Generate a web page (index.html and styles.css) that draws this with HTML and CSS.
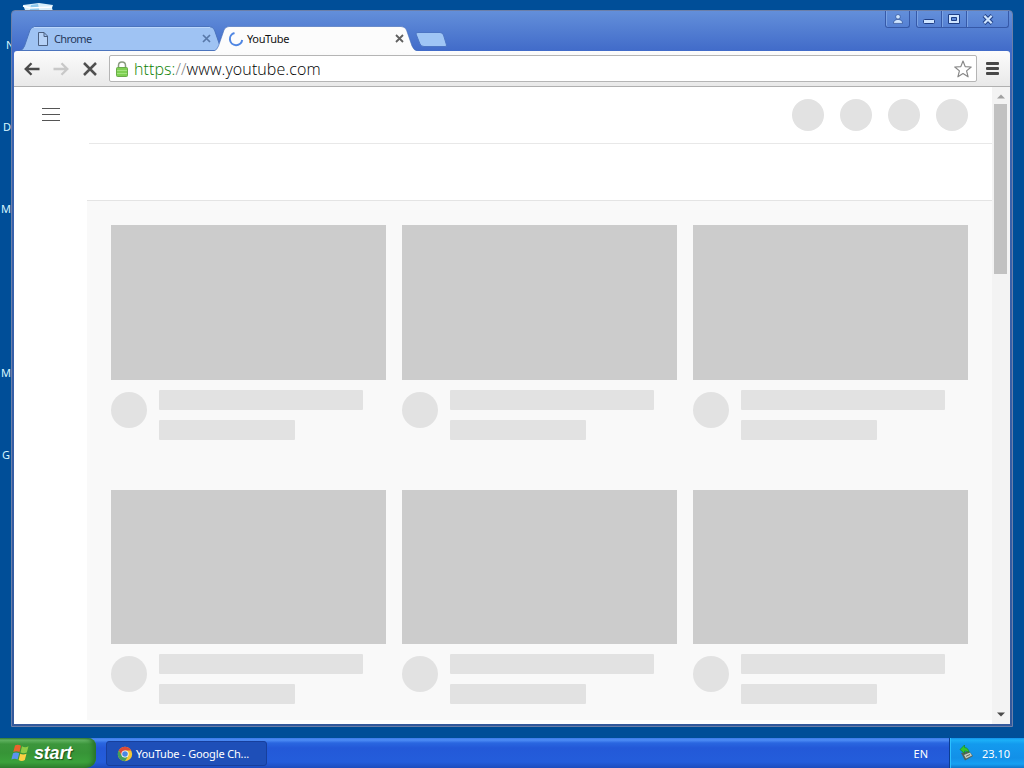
FILE: index.html
```html
<!DOCTYPE html>
<html lang="en">

<head>
  <meta charset="utf-8">
  <title>YouTube</title>
  <link rel="stylesheet" href="styles.css">
</head>

<body>
  <div class="desktop">
    <!-- desktop icons peeking out behind the window -->
    <svg class="desk-icon" width="34" height="10" viewBox="0 0 34 10">
      <path d="M1 2 L17 0 L31 2 L30 5 L31 8 L31 10 L2 10 L3 7 Z" fill="#d9effb" />
      <path d="M9 2 L16 1 L18 10 L7 10 Z" fill="#8cc8ee" />
      <path d="M1 3 L8 5 L30 4" fill="none" stroke="#fff" stroke-width="1.5" />
    </svg>
    <span class="desk-label label-n">N</span>
    <span class="desk-label label-d">D</span>
    <span class="desk-label label-m1">M</span>
    <span class="desk-label label-m2">M</span>
    <span class="desk-label label-g">G</span>

    <div class="window">
      <div class="titlebar">
        <div class="tab tab-inactive">
          <svg class="tab-shape" width="204" height="25" viewBox="0 0 204 25">
            <path d="M0 24.5 Q3 24 4.500 20 L10 4 Q11.500 .5 15 .5 H189 Q193 .5 194.500 4 L200 20 Q201 24 204 24.500 Z" fill="#9fc3f3" stroke="#4b74bd" />
            <path d="M14 1.500 H190" stroke="#bcd7fb" />
          </svg>
          <svg class="tab-icon page-icon" width="12" height="14" viewBox="0 0 12 14">
            <path d="M1.500 .5 H7 L10.500 4 V13.500 H1.500 Z M7 .5 V4.500 H10.500" fill="#b5d1f7" stroke="#4b5f80" />
          </svg>
          <span class="tab-title">Chrome</span>
          <svg class="tab-close" width="9" height="9" viewBox="0 0 9 9">
            <path d="M1 1 L8 8 M8 1 L1 8" stroke="#5878a8" stroke-width="1.700" />
          </svg>
        </div>
        <div class="tab tab-active">
          <svg class="tab-shape" width="204" height="25" viewBox="0 0 204 25">
            <path d="M0 25 Q3 24 4.500 20 L10 4 Q11.500 .5 15 .5 H187 Q191 .5 192.500 4 L198 20 Q200 25 204 25 Z" fill="#fcfcfc" />
            <path d="M0 25 Q3 24 4.500 20 L10 4 Q11.500 .5 15 .5 H187 Q191 .5 192.500 4 L198 20 Q200 25 204 25" fill="none" stroke="#416bb8" stroke-opacity=".6" />
          </svg>
          <svg class="tab-icon" width="16" height="16" viewBox="0 0 16 16">
            <path d="M6.500 2 A6.200 6.200 0 1 0 14.200 9" fill="none" stroke="#4f86e3" stroke-width="2" />
          </svg>
          <span class="tab-title">YouTube</span>
          <svg class="tab-close" width="9" height="9" viewBox="0 0 9 9">
            <path d="M1 1 L8 8 M8 1 L1 8" stroke="#606060" stroke-width="1.800" />
          </svg>
        </div>
        <svg class="new-tab" width="33" height="17" viewBox="0 0 33 17">
          <path d="M3 1.500 H25 Q27.500 1.500 28.500 4 L31.500 14 Q32 15.500 30 15.500 H9 Q6 15.500 5 13 L1 3 Q.5 1.500 3 1.500 Z" fill="#9fc5f5" stroke="#4c75c4" />
        </svg>
        <div class="window-buttons">
          <div class="win-btn btn-user">
            <svg width="10" height="10" viewBox="0 0 10 10">
              <circle cx="5" cy="2.800" r="2.300" fill="#cfe5ff" stroke="#1f3f86" stroke-width=".6" />
              <path d="M.4 9.400 Q.6 5.700 5 5.400 Q9.400 5.700 9.600 9.400 Z" fill="#cfe5ff" stroke="#1f3f86" stroke-width=".6" />
            </svg>
          </div>
          <div class="win-btn btn-min">
            <svg width="13" height="12" viewBox="0 0 13 12">
              <rect x=".5" y="6.500" width="11" height="4" rx="1" fill="#cfe5ff" stroke="#1f3f86" />
            </svg>
          </div>
          <div class="win-btn btn-max">
            <svg width="12" height="10" viewBox="0 0 12 10">
              <path d="M.5 .5 H11.500 V9.500 H.5 Z M3.500 3.500 V6.500 H8.500 V3.500 Z" fill="#cfe5ff" fill-rule="evenodd" stroke="#1f3f86" />
            </svg>
          </div>
          <div class="win-btn btn-close">
            <svg width="12" height="11" viewBox="0 0 12 11">
              <path d="M2 1.500 L10 9.500 M10 1.500 L2 9.500" stroke="#1f3f86" stroke-width="4" />
              <path d="M2.300 1.800 L9.700 9.200 M9.700 1.800 L2.300 9.200" stroke="#cfe5ff" stroke-width="2.200" />
            </svg>
          </div>
        </div>
      </div>

      <div class="toolbar">
        <svg class="nav-icon" width="16" height="14" viewBox="0 0 16 14">
          <path d="M15.500 7 H2 M7.500 1.200 L1.700 7 L7.500 12.800" fill="none" stroke="#4a4a4a" stroke-width="2.300" />
        </svg>
        <svg class="nav-icon" width="16" height="14" viewBox="0 0 16 14">
          <path d="M.5 7 H14 M8.500 1.200 L14.300 7 L8.500 12.800" fill="none" stroke="#c8c8c8" stroke-width="2.300" />
        </svg>
        <svg class="nav-icon" width="14" height="14" viewBox="0 0 14 14">
          <path d="M1 1 L13 13 M13 1 L1 13" stroke="#505050" stroke-width="2.500" />
        </svg>
        <div class="omnibox">
          <svg class="lock" width="12" height="16" viewBox="0 0 12 16">
            <path d="M2.500 8 V4.500 Q2.500 1 6 1 Q9.500 1 9.500 4.500 V8" fill="none" stroke="#8a9a80" stroke-width="1.500" />
            <rect x=".5" y="6.500" width="11" height="9" rx="1" fill="#7fd053" stroke="#6aab4a" />
            <path d="M1 9.500 H11 M1 12.500 H11" stroke="#a3e37f" />
          </svg>
          <span class="url"><span class="scheme">https:</span><span class="slashes">//</span>www.youtube.com</span>
          <svg class="star" width="18" height="18" viewBox="0 0 18 18">
            <path d="M9 1 L11.200 6.600 L17.200 7 L12.600 10.900 L14.100 16.800 L9 13.600 L3.900 16.800 L5.400 10.900 L.8 7 L6.800 6.600 Z" fill="#fff" stroke="#888" stroke-width="1.200" stroke-linejoin="round" />
          </svg>
        </div>
        <div class="menu-icon"><i></i><i></i><i></i></div>
      </div>

      <div class="viewport">
        <div class="page">
          <div class="guide">
            <div class="guide-button"></div>
          </div>
          <div class="main">
            <div class="masthead">
              <span class="round"></span>
              <span class="round"></span>
              <span class="round"></span>
              <span class="round"></span>
            </div>
            <div class="chips"></div>
            <div class="grid">
              <div class="video">
                <div class="thumb"></div>
                <div class="details"><span class="avatar"></span><div class="lines"><div class="line"></div><div class="line short"></div></div></div>
              </div>
              <div class="video">
                <div class="thumb"></div>
                <div class="details"><span class="avatar"></span><div class="lines"><div class="line"></div><div class="line short"></div></div></div>
              </div>
              <div class="video">
                <div class="thumb"></div>
                <div class="details"><span class="avatar"></span><div class="lines"><div class="line"></div><div class="line short"></div></div></div>
              </div>
              <div class="video">
                <div class="thumb"></div>
                <div class="details"><span class="avatar"></span><div class="lines"><div class="line"></div><div class="line short"></div></div></div>
              </div>
              <div class="video">
                <div class="thumb"></div>
                <div class="details"><span class="avatar"></span><div class="lines"><div class="line"></div><div class="line short"></div></div></div>
              </div>
              <div class="video">
                <div class="thumb"></div>
                <div class="details"><span class="avatar"></span><div class="lines"><div class="line"></div><div class="line short"></div></div></div>
              </div>
            </div>
          </div>
        </div>
        <div class="scrollbar">
          <svg width="8" height="5" viewBox="0 0 8 5"><path d="M0 4.500 L4 .5 L8 4.500 Z" fill="#a0a0a0" /></svg>
          <div class="scroll-thumb"></div>
          <svg class="scroll-down" width="8" height="5" viewBox="0 0 8 5"><path d="M0 .5 L4 4.500 L8 .5 Z" fill="#4a4a4a" /></svg>
        </div>
      </div>
    </div>
  </div>

  <div class="taskbar">
    <div class="start">
      <svg width="20" height="20" viewBox="0 0 20 20">
        <path d="M4 2.500 Q7 .8 10 2.800 L8.500 9 Q5.500 7.500 2.300 9 Z" fill="#e9632d" />
        <path d="M11 3.300 Q14 5 17.500 3.300 L15.800 9.500 Q12.500 11 9.500 9.500 Z" fill="#8ccc45" />
        <path d="M2 10.200 Q5 8.700 8.200 10.200 L6.600 16.500 Q3.500 15 .4 16.500 Z" fill="#5b93ee" />
        <path d="M9.200 10.700 Q12.300 12.300 15.500 10.700 L13.800 17 Q10.800 18.800 7.600 17 Z" fill="#fbd043" />
      </svg>
      <span>start</span>
    </div>
    <div class="task">
      <svg width="16" height="16" viewBox="0 0 16 16">
        <circle cx="8" cy="8" r="7.200" fill="#f3c736" />
        <path d="M1.760 4.400 A7.200 7.200 0 0 1 14.240 4.400 L8 4.400 L4.900 9.800 Z" fill="#dc4a38" />
        <path d="M1.760 4.400 L4.900 9.800 L8 11.600 L11 9.900 L8 15.200 A7.200 7.200 0 0 1 1.760 4.400 Z" fill="#44a05a" />
        <circle cx="8" cy="8" r="3.600" fill="#fff" />
        <circle cx="8" cy="8" r="2.800" fill="#4a86e0" />
      </svg>
      <span>YouTube - Google Ch...</span>
    </div>
    <span class="lang">EN</span>
    <div class="tray">
      <svg width="16" height="16" viewBox="0 0 16 16">
        <path d="M2 8 L10 6 L14 11 L6 15.500 Z" fill="#52635b" />
        <path d="M5 10 L11 7.500 L13 10.500 L7 13.500 Z" fill="#c9cfc0" />
        <path d="M7 11.300 L11 9.500" stroke="#59645c" />
        <path d="M1 4.500 L5.500 0 V2.500 Q9.500 2.700 10 7.500 Q8.500 5.800 5.500 6 V8.500 Z" fill="#35c62d" stroke="#168022" stroke-width=".6" />
      </svg>
      <span>23.10</span>
    </div>
  </div>
</body>

</html>
```
FILE: styles.css
```css
* {
  box-sizing: border-box;
}

body {
  margin: 0;
  width: 1024px;
  height: 768px;
  overflow: hidden;
  display: flex;
  flex-direction: column;
  font-family: "Noto Sans", "Open Sans", sans-serif;
  font-size: 11px;
  color: #111;
}

svg {
  display: block;
  flex: none;
}

.desktop {
  position: relative;
  flex: 1;
  background: #004e98;
}

.desk-icon {
  position: absolute;
  left: 22px;
  top: 3px;
}

.desk-label {
  position: absolute;
  left: 2px;
  line-height: 14px;
  color: #d8f6ff;
}

.label-n {
  left: 6px;
  top: 38px;
}

.label-d {
  left: 3px;
  top: 120px;
}

.label-m1 {
  left: 1px;
  top: 202px;
}

.label-m2 {
  left: 1px;
  top: 366px;
}

.label-g {
  top: 448px;
}

/* browser window */
.window {
  position: absolute;
  left: 11px;
  top: 10px;
  width: 1002px;
  height: 717px;
  padding: 0 2px 2px;
  display: flex;
  flex-direction: column;
  border: 1px solid #6c7fa8;
  border-radius: 4px 4px 0 0;
  background: linear-gradient(#638fda 0, #416bc9 40px, #3a64b0 80px, #33599c);
}

.titlebar {
  height: 40px;
  flex: none;
  display: flex;
  align-items: flex-end;
  padding-left: 6px;
}

.tab {
  position: relative;
  width: 204px;
  height: 25px;
  display: flex;
  align-items: center;
  padding: 0 13px 0 16px;
}

.tab-active {
  width: 204px;
  margin-left: -10px;
  padding: 0 14px 0 14px;
}

.tab-shape {
  position: absolute;
  left: 0;
  top: 0;
}

.tab-icon,
.tab-title,
.tab-close {
  position: relative;
}

.page-icon {
  margin-left: 1px;
}

.tab-title {
  flex: 1;
  margin-left: 5px;
  line-height: 14px;
  letter-spacing: -.6px;
}

.tab-inactive .tab-title {
  color: #26395c;
}

.tab-active .tab-title {
  margin-left: 3px;
  letter-spacing: -.35px;
}

.new-tab {
  margin: 0 0 3px -3px;
}

.window-buttons {
  display: flex;
  align-self: flex-start;
  margin-left: auto;
  margin-right: 1px;
}

.win-btn {
  height: 17px;
  display: flex;
  align-items: center;
  justify-content: center;
  border: 1px solid #3659a8;
  border-top: none;
  box-shadow: inset 1px 0 #7ba3e4;
}

.btn-user {
  width: 25px;
  margin-right: 6px;
  border-radius: 0 0 3px 3px;
}

.btn-min {
  width: 26px;
  border-radius: 0 0 0 3px;
}

.btn-max {
  width: 25px;
  border-left: none;
}

.btn-close {
  width: 42px;
  border-left: none;
  border-radius: 0 0 3px 0;
}

.toolbar {
  height: 36px;
  flex: none;
  display: flex;
  align-items: center;
  padding: 0 11px 0 10px;
  background: linear-gradient(#fcfcfc, #e9e9e9);
  border-bottom: 1px solid #b0b0b0;
  border-radius: 3px 3px 0 0;
}

.nav-icon {
  margin-right: 13px;
}

.nav-icon:nth-child(2) {
  margin-right: 14px;
}

.nav-icon:nth-child(3) {
  margin-right: 12px;
}

.omnibox {
  flex: 1;
  height: 27px;
  display: flex;
  align-items: center;
  padding: 0 4px 0 6px;
  background: #fff;
  border: 1px solid #b5b5b5;
  border-radius: 2px;
}

.url {
  flex: 1;
  margin-left: 6px;
  font-family: "Open Sans", sans-serif;
  font-size: 16px;
  font-weight: 300;
  line-height: 22px;
  letter-spacing: .09px;
  color: #000;
}

.scheme {
  color: #0b8000;
}

.slashes {
  color: #808080;
}

.menu-icon {
  width: 13px;
  margin-left: 9px;
  display: flex;
  flex-direction: column;
  gap: 2px;
}

.menu-icon i {
  height: 3px;
  background: #484848;
  border-radius: 1px;
}

/* page content */
.viewport {
  flex: 1;
  min-height: 0;
  display: flex;
  background: #fff;
}

.page {
  flex: 1;
  display: flex;
  overflow: hidden;
}

.guide {
  width: 73px;
  padding: 21px 0 0 28px;
}

.guide-button {
  width: 18px;
  height: 13px;
  border-top: 1px solid #555;
  border-bottom: 1px solid #555;
  background: linear-gradient(#555, #555) 0 5px / 100% 1px no-repeat;
}

.main {
  flex: 1;
}

.masthead {
  height: 57px;
  margin-left: 2px;
  display: flex;
  justify-content: flex-end;
  align-items: center;
  gap: 16px;
  padding-right: 24px;
  border-bottom: 1px solid #e8e8e8;
}

.round {
  width: 32px;
  height: 32px;
  border-radius: 50%;
  background: #e2e2e2;
}

.chips {
  height: 57px;
  border-bottom: 1px solid #e4e4e4;
}

.grid {
  height: 519px;
  display: grid;
  grid-template-columns: repeat(3, 275px);
  grid-template-rows: 265px 264px;
  column-gap: 16px;
  padding: 24px;
  background: #f9f9f9;
}

.thumb {
  height: 155px;
  background: #ccc;
}

.video:nth-child(n+4) .thumb {
  height: 154px;
}

.details {
  display: flex;
  gap: 12px;
  padding-top: 10px;
}

.avatar {
  width: 36px;
  height: 36px;
  margin-top: 2px;
  border-radius: 50%;
  background: #e2e2e2;
}

.line {
  width: 204px;
  height: 20px;
  margin-bottom: 10px;
  border-radius: 1px;
  background: #e2e2e2;
}

.short {
  width: 136px;
}

.scrollbar {
  width: 18px;
  display: flex;
  flex-direction: column;
  align-items: center;
  padding: 7px 2px 7px 1px;
  background: #f3f3f3;
}

.scroll-thumb {
  width: 13px;
  height: 170px;
  margin-top: 5px;
  background: #c1c1c1;
}

.scroll-down {
  margin-top: auto;
}

/* taskbar */
.taskbar {
  height: 30px;
  flex: none;
  display: flex;
  align-items: center;
  color: #fff;
  background: linear-gradient(#3c7ae8 0, #4d8df5 2px, #2a66e0 5px, #2359d8 10px, #245ddb 24px, #1d4cbd);
}

.start {
  width: 96px;
  height: 30px;
  display: flex;
  align-items: center;
  gap: 3px;
  padding-left: 11px;
  border-radius: 0 8px 10px 0;
  background: linear-gradient(#357a35 0, #63b463 2px, #3c963c 6px, #379437 15px, #3ba13b 24px, #2f7f2f);
  box-shadow: inset -5px 0 5px -2px #287228;
}

.start span {
  font-family: "Liberation Sans", sans-serif;
  font-size: 18px;
  font-style: italic;
  font-weight: 700;
  line-height: 24px;
  letter-spacing: -.2px;
  text-shadow: 1px 1px 1px #1c4f1c;
}

.task {
  width: 161px;
  height: 25px;
  margin: 1px 0 0 10px;
  display: flex;
  align-items: center;
  gap: 3px;
  padding-left: 10px;
  border: 1px solid #173f9c;
  border-radius: 3px;
  background: #1e4fb8;
  letter-spacing: -.15px;
  white-space: nowrap;
}

.lang {
  margin-left: auto;
}

.tray {
  width: 75px;
  height: 30px;
  margin-left: 21px;
  display: flex;
  align-items: center;
  gap: 7px;
  padding-left: 9px;
  border-left: 1px solid #0b3d92;
  background: linear-gradient(#1391ea 0, #1cb0f8 2px, #139aee 6px, #1290e8 20px, #15a0f2 26px, #0f75cb);
  box-shadow: inset 1px 0 #2cc0ff;
}
```
